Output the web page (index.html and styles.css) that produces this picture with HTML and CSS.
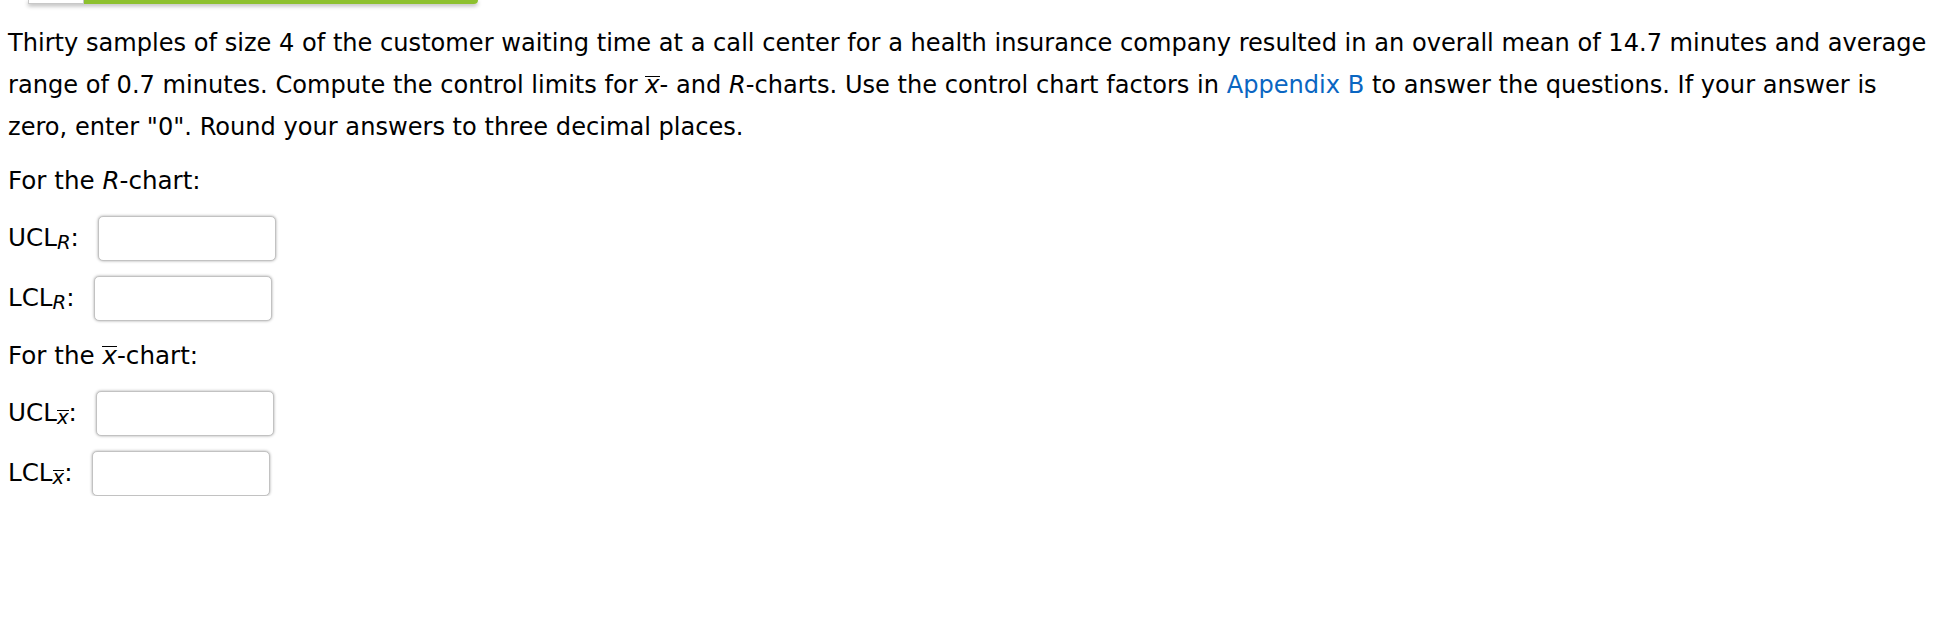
FILE: index.html
```html
<!DOCTYPE html>
<html>
<head>
<meta charset="utf-8">
<link rel="stylesheet" href="styles.css">
</head>
<body>
<div class="topbar"><div class="tb-white"></div><div class="tb-green"></div></div>
<div class="question">
<p class="para">Thirty samples of size 4 of the customer waiting time at a call center for a health insurance company resulted in an overall mean of 14.7 minutes and average range of 0.7 minutes. Compute the control limits for <span class="xbar">x</span>- and <i>R</i>-charts. Use the control chart factors in <a class="link" href="#">Appendix B</a> to answer the questions. If your answer is zero, enter "0". Round your answers to three decimal places.</p>
<p class="section sec-r">For the <i>R</i>-chart:</p>
<div class="row row-first"><span class="lbl">UCL<span class="sub">R</span>:</span><input class="box" type="text"></div>
<div class="row"><span class="lbl">LCL<span class="sub">R</span>:</span><input class="box" type="text"></div>
<p class="section sec-x">For the <span class="xbar">x</span>-chart:</p>
<div class="row row-first"><span class="lbl">UCL<span class="sub"><span class="xbar">x</span></span>:</span><input class="box" type="text"></div>
<div class="row"><span class="lbl">LCL<span class="sub"><span class="xbar">x</span></span>:</span><input class="box" type="text"></div>
</div>
</body>
</html>
```
FILE: styles.css
```css
html, body {
  margin: 0;
  padding: 0;
  background: #fff;
}
body {
  font-family: "DejaVu Sans", Verdana, sans-serif;
  font-size: 24.6px;
  color: #000;
}
.topbar {
  display: flex;
  margin-left: 28px;
  width: 450px;
  height: 4px;
  box-shadow: 0 2px 4px rgba(0,0,0,0.3);
  border-bottom-right-radius: 4px;
}
.tb-white {
  width: 56px;
  background: #fff;
  border: 1px solid #c8c8c8;
  border-top: none;
  box-sizing: border-box;
}
.tb-green {
  flex: 1;
  background: #8dc02e;
  border-bottom-right-radius: 4px;
}
.question {
  padding: 0 8px;
}
.para {
  margin: 18px 0 0 0;
  max-width: 1926px;
  font-size: 24.1px;
  line-height: 42px;
}
.section {
  margin: 0;
  line-height: 42px;
}
.sec-r {
  margin-top: 12px;
}
.sec-x {
  margin-top: 14px;
}
.row {
  display: flex;
  align-items: center;
  margin-top: 15px;
  height: 45px;
}
.row-first {
  margin-top: 14px;
}
.lbl {
  margin-right: 19px;
  padding-top: 4px;
  line-height: 42px;
}
.sub {
  font-style: italic;
  font-size: 0.8em;
  vertical-align: -3px;
}
.xbar {
  display: inline-block;
  font-style: italic;
  line-height: 0.7em;
  border-top: 1.5px solid currentColor;
}
.link {
  color: #0a66c2;
  text-decoration: none;
}
.box {
  width: 178px;
  height: 45px;
  box-sizing: border-box;
  border: 1px solid #c2c2c2;
  border-radius: 5px;
  box-shadow: 0 0 3px rgba(0,0,0,0.35);
  font-size: 20px;
  padding: 0 8px;
  background: #fff;
}
```
